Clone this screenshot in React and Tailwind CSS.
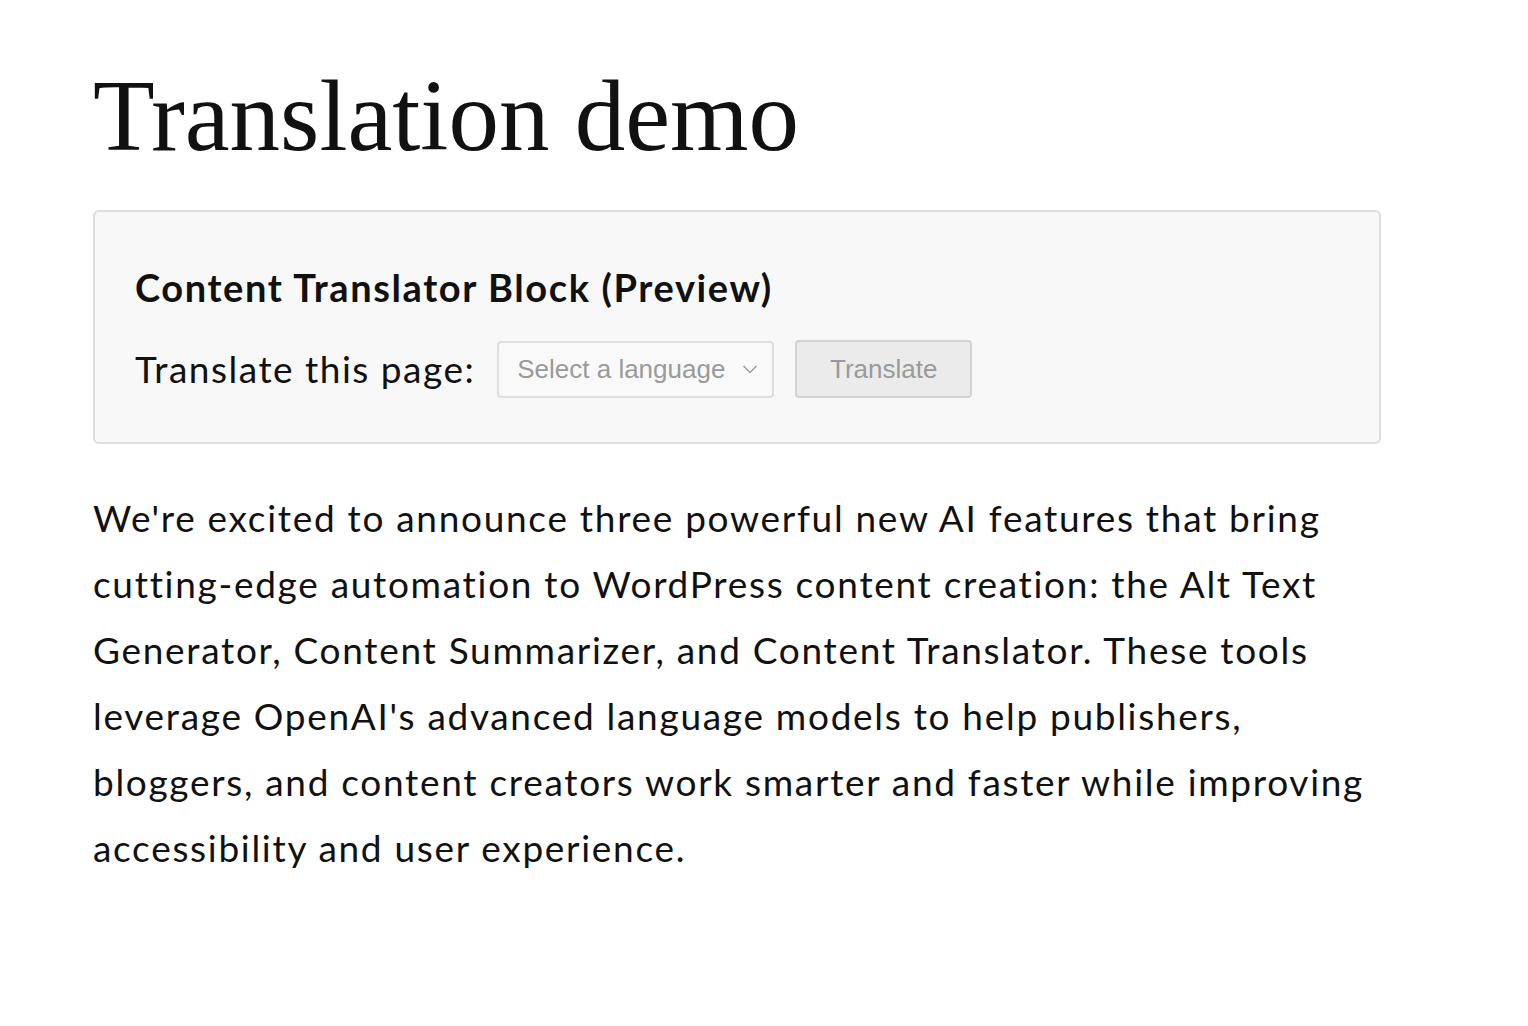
import React from "react";

export default function App() {
  const lines = [
    "We're excited to announce three powerful new AI features that bring",
    "cutting-edge automation to WordPress content creation: the Alt Text",
    "Generator, Content Summarizer, and Content Translator. These tools",
    "leverage OpenAI's advanced language models to help publishers,",
    "bloggers, and content creators work smarter and faster while improving",
    "accessibility and user experience.",
  ];
  return (
    <div className="min-h-screen bg-white text-[#111111]">
      <div className="pl-[93px] pt-[56px] w-[1381px]">
        <h1 className="font-['Liberation_Serif',serif] text-[101px] leading-[120px] font-normal text-[#111]">
          Translation demo
        </h1>
        <div className="mt-[34px] border-2 border-[#dddddd] rounded-[6px] bg-[#f8f8f8] pl-[40px] pr-[40px] pt-[50px] pb-[44px]">
          <h2 className="font-['Lato',sans-serif] font-bold text-[38px] tracking-[1.6px] leading-[50px] text-[#111]">
            Content Translator Block (Preview)
          </h2>
          <div className="mt-[28px] flex items-center">
            <span className="font-['Lato',sans-serif] text-[37px] tracking-[1.5px] leading-[50px] text-[#111]">
              Translate this page:
            </span>
            <div className="ml-[22px] w-[277px] h-[57px] border-2 border-[#dedede] rounded-[4px] bg-[#f9f9f9] flex items-center justify-between pl-[18px] pr-[12px]">
              <span className="font-['Liberation_Sans',Arial,sans-serif] text-[26px] text-[#9a9a9a]">
                Select a language
              </span>
              <svg width="16" height="10" viewBox="0 0 16 10" fill="none" className="mr-[2px]">
                <path d="M1.5 2 L8 8.5 L14.5 2" stroke="#9a9a9a" strokeWidth="1.4" />
              </svg>
            </div>
            <div className="ml-[21px] w-[177px] h-[58px] border-2 border-[#d2d2d2] rounded-[4px] bg-[#ebebeb] flex items-center justify-center">
              <span className="font-['Liberation_Sans',Arial,sans-serif] text-[26px] text-[#9a9a9a]">
                Translate
              </span>
            </div>
          </div>
        </div>
        <p className="mt-[41px] font-['Lato',sans-serif] text-[37px] tracking-[1.7px] leading-[66px] text-[#111]">
          {lines.map((l, i) => (
            <React.Fragment key={i}>
              <span className="whitespace-nowrap">{l}</span>
              {i < lines.length - 1 && <br />}
            </React.Fragment>
          ))}
        </p>
      </div>
    </div>
  );
}
